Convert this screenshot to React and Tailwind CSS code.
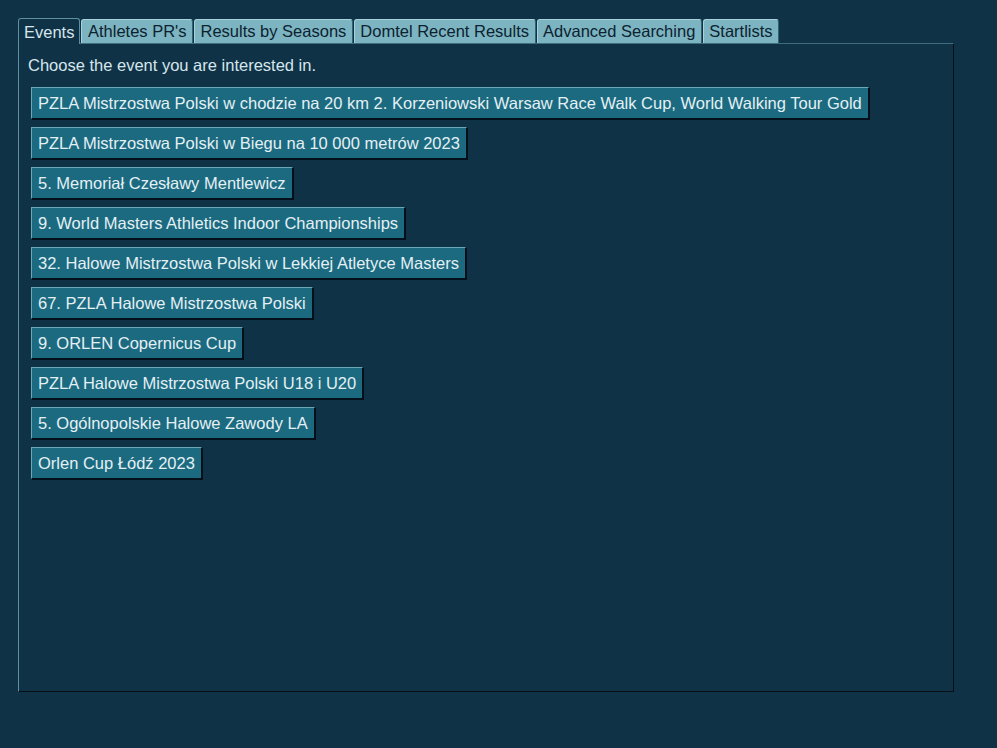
import React, { useState } from 'react';

const tabs = [
  'Events',
  "Athletes PR's",
  'Results by Seasons',
  'Domtel Recent Results',
  'Advanced Searching',
  'Startlists',
];

const events = [
  'PZLA Mistrzostwa Polski w chodzie na 20 km 2. Korzeniowski Warsaw Race Walk Cup, World Walking Tour Gold',
  'PZLA Mistrzostwa Polski w Biegu na 10 000 metrów 2023',
  '5. Memoriał Czesławy Mentlewicz',
  '9. World Masters Athletics Indoor Championships',
  '32. Halowe Mistrzostwa Polski w Lekkiej Atletyce Masters',
  '67. PZLA Halowe Mistrzostwa Polski',
  '9. ORLEN Copernicus Cup',
  'PZLA Halowe Mistrzostwa Polski U18 i U20',
  '5. Ogólnopolskie Halowe Zawody LA',
  'Orlen Cup Łódź 2023',
];

export default function App() {
  const [active, setActive] = useState(0);

  return (
    <div className="min-h-[748px] w-full bg-[#0f3246] pt-[18px] pl-[18px] font-['Liberation_Sans',Arial,sans-serif] text-[16.5px]">
      <div className="w-[936px]">
        {/* Tabs */}
        <div className="flex items-end gap-[1px]">
          {tabs.map((t, i) =>
            i === active ? (
              <button
                key={t}
                onClick={() => setActive(i)}
                className="relative -mb-[1px] h-[26px] rounded-t-[3px] border border-b-0 border-[#5f8ea2] bg-[#0f3246] px-[5px] leading-[24px] text-[#d6e6ec]"
              >
                {t}
              </button>
            ) : (
              <button
                key={t}
                onClick={() => setActive(i)}
                className="h-[24px] rounded-t-[3px] border-t border-l border-r border-t-[#a9d3dc] border-l-[#a9d3dc] border-r-[#2f6676] bg-[#7db4c1] px-[5.5px] leading-[23px] text-[#0c2230]"
              >
                {t}
              </button>
            )
          )}
        </div>

        {/* Panel */}
        <div className="h-[649px] border-t border-l border-t-[#3f6e82] border-l-[#5f8ea2] border-r border-b border-r-[#050f15] border-b-[#050f15] bg-[#0f3246] px-[9px] pt-[12px]">
          <p className="leading-[19px] text-[#d6e6ec]">Choose the event you are interested in.</p>
          <div className="mt-[12px] flex flex-col items-start gap-[8px] pl-[3px]">
            {events.map((e) => (
              <button
                key={e}
                className="h-[32px] border border-t-[#6aa7b8] border-l-[#6aa7b8] border-r-[#03101a] border-b-[#03101a] bg-[#1b6a80] px-[6px] text-left leading-[30px] whitespace-nowrap text-[#e4f0f4] shadow-[1px_1px_0_#03101a]"
              >
                {e}
              </button>
            ))}
          </div>
        </div>
      </div>
    </div>
  );
}
